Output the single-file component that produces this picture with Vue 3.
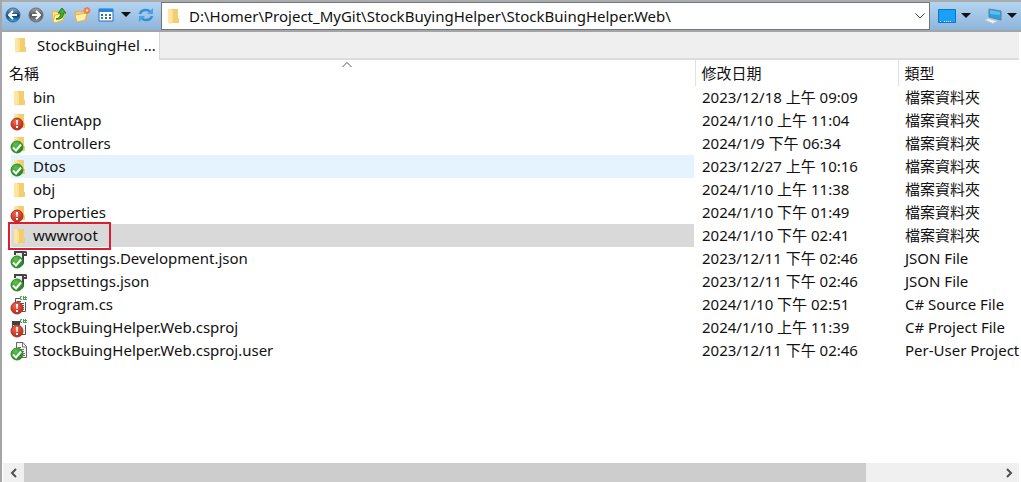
<script setup>
const files = [
  { name: 'bin', kind: 'folder', status: '', date: '2023/12/18 上午 09:09', type: '檔案資料夾' },
  { name: 'ClientApp', kind: 'folder', status: 'changed', date: '2024/1/10 上午 11:04', type: '檔案資料夾' },
  { name: 'Controllers', kind: 'folder', status: 'ok', date: '2024/1/9 下午 06:34', type: '檔案資料夾' },
  { name: 'Dtos', kind: 'folder', status: 'ok', date: '2023/12/27 上午 10:16', type: '檔案資料夾', hover: true },
  { name: 'obj', kind: 'folder', status: '', date: '2024/1/10 上午 11:38', type: '檔案資料夾' },
  { name: 'Properties', kind: 'folder', status: 'changed', date: '2024/1/10 下午 01:49', type: '檔案資料夾' },
  { name: 'wwwroot', kind: 'folder', status: '', date: '2024/1/10 下午 02:41', type: '檔案資料夾', selected: true },
  { name: 'appsettings.Development.json', kind: 'json', status: 'ok', date: '2023/12/11 下午 02:46', type: 'JSON File' },
  { name: 'appsettings.json', kind: 'json', status: 'ok', date: '2023/12/11 下午 02:46', type: 'JSON File' },
  { name: 'Program.cs', kind: 'cs', status: 'changed', date: '2024/1/10 下午 02:51', type: 'C# Source File' },
  { name: 'StockBuingHelper.Web.csproj', kind: 'csproj', status: 'changed', date: '2024/1/10 上午 11:39', type: 'C# Project File' },
  { name: 'StockBuingHelper.Web.csproj.user', kind: 'doc', status: 'ok', date: '2023/12/11 下午 02:46', type: 'Per-User Project' },
]
const path = 'D:\\Homer\\Project_MyGit\\StockBuyingHelper\\StockBuingHelper.Web\\'
</script>

<template>
  <svg class="defs" width="0" height="0" aria-hidden="true">
    <defs>
      <linearGradient id="g-folder" x1="0" x2="1"><stop offset="0" stop-color="#ffecb0" /><stop offset="1" stop-color="#f7d270" /></linearGradient>
      <radialGradient id="g-red" cx=".4" cy=".3" r=".8"><stop offset="0" stop-color="#ee6a50" /><stop offset="1" stop-color="#ad2115" /></radialGradient>
      <radialGradient id="g-green" cx=".4" cy=".3" r=".8"><stop offset="0" stop-color="#63c24c" /><stop offset="1" stop-color="#167a1a" /></radialGradient>
      <linearGradient id="g-blue" x2="0" y2="1"><stop offset="0" stop-color="#8fb4d0" /><stop offset=".45" stop-color="#1d5482" /><stop offset=".55" stop-color="#0b3c6b" /><stop offset="1" stop-color="#38b6ee" /></linearGradient>
      <linearGradient id="g-gray" x2="0" y2="1"><stop offset="0" stop-color="#a8a8a8" /><stop offset=".5" stop-color="#50565c" /><stop offset="1" stop-color="#8b9196" /></linearGradient>
      <symbol id="i-folder" viewBox="0 0 16 18">
        <path d="M3 2h10v14H3z" fill="url(#g-folder)" />
        <path d="M6 2h7v9h1v5H6l2-1V4z" fill="#f3ce70" />
        <path d="M3 2l3 1v14l-3-1z" fill="#ffe6a0" />
      </symbol>
      <symbol id="i-json" viewBox="0 0 16 18">
        <path d="M4 2h9v11l-3 3H4z" fill="#eee" />
        <path d="M4 5V2h10q2 0 2 3h-4M12 3v9q0 3-3 3H7" fill="none" stroke="#444" stroke-width="2" />
      </symbol>
      <symbol id="i-cs" viewBox="0 0 16 18">
        <path d="M4 3h8l3 3v10H4z" fill="#f7f7f7" />
        <path d="M9 2.500H4.500v13h10V6" fill="none" stroke="#555" />
        <path d="M6 5.500h4M7 7.500h6M9 9.500h4M10 11.500h3M10 13.500h3" stroke="#555" />
        <path d="M11 .5H9.500v3H11M12.500 0v4M14.500 0v4M12 1.500h4M12 3.500h4" fill="none" stroke="#48a354" />
      </symbol>
      <symbol id="i-csproj" viewBox="0 0 16 18">
        <path d="M2 4h12v12H2z" fill="#f4f4f4" />
        <path d="M1 2h8v4H1z" fill="#414141" />
        <path d="M1.500 6v9.500h13V6" fill="none" stroke="#555" />
        <path d="M11 .5H9.500v3H11M12.500 0v4M14.500 0v4M12 1.500h4M12 3.500h4" fill="none" stroke="#48a354" />
      </symbol>
      <symbol id="i-doc" viewBox="0 0 16 18">
        <path d="M5.500.5H12l3.500 4v11h-10z" fill="#f5f5f5" stroke="#666" />
        <path d="M11.500 1v4h4M7 5.500h3M7 7.500h6M9 9.500h4M11 11.500h3M11 13.500h3" fill="none" stroke="#777" />
      </symbol>
      <symbol id="s-ok" viewBox="0 0 14 14">
        <circle cx="7" cy="7" r="6" fill="url(#g-green)" stroke="#2c8e29" />
        <path d="M3 7.500l3 3 5-6" fill="none" stroke="#fff" stroke-width="2" />
      </symbol>
      <symbol id="s-changed" viewBox="0 0 14 14">
        <circle cx="7" cy="7" r="6" fill="url(#g-red)" stroke="#b52e20" />
        <path d="M6 3h2l-.4 5H6.400zM6 9h2v2H6z" fill="#fff" />
      </symbol>
    </defs>
  </svg>

  <main class="explorer">
    <header class="toolbar">
      <button class="tool" aria-label="Back">
        <svg width="16" height="16" viewBox="0 0 16 16"><circle cx="8" cy="8" r="7" fill="url(#g-blue)" stroke="#41647f" /><path d="M12 8H5M8 4L4 8l4 4" fill="none" stroke="#fff" stroke-width="2" /></svg>
      </button>
      <button class="tool" aria-label="Forward">
        <svg width="16" height="16" viewBox="0 0 16 16"><circle cx="8" cy="8" r="7" fill="url(#g-gray)" stroke="#686d72" /><path d="M4 8h7M8 4l4 4-4 4" fill="none" stroke="#fff" stroke-width="2" /></svg>
      </button>
      <button class="tool" aria-label="Up one folder">
        <svg width="16" height="16" viewBox="0 0 16 16"><path d="M1 5l4-1 1 1 6-1v9l-8 3-2-2z" fill="#ffe27c" stroke="#dfb74e" /><path d="M2 14l2-6 10-2-2 7-8 3z" fill="#fff0a4" stroke="#dfb74e" /><path d="M5 12q5-1 4.500-6H7l4-5 4 5h-2.500q0 7-7.500 6z" fill="#48ae32" stroke="#237d1c" /></svg>
      </button>
      <button class="tool" aria-label="New folder">
        <svg width="17" height="16" viewBox="0 0 17 16"><path d="M1 5l5-1 1 1 7-1-2 9-9 2z" fill="#ffd071" stroke="#e8ac4c" /><path d="M1 8l12-2-2 7-8 2z" fill="#fff0ae" stroke="#e8b55b" /><path d="M13 0v7M9.500 3.500h7M10.500 1l5 5M15.500 1l-5 5" stroke="#ed7443" stroke-width="1.500" /><circle cx="13" cy="3.500" r="1.300" fill="#ffdf9e" /></svg>
      </button>
      <button class="tool view" aria-label="View">
        <svg width="16" height="14" viewBox="0 0 16 14"><path d="M1 1h14v12H1z" fill="#fff" stroke="#2270bd" /><path d="M1 1h14v3H1z" fill="#2387dc" /><path d="M3 6h2v2H3zM11 6h2v2h-2zM7 9h2v2H7z" fill="#2c65bb" /><path d="M7 6h2v2H7zM3 9h2v2H3z" fill="#358f78" /><path d="M11 9h2v2h-2z" fill="#604a8d" /></svg>
        <svg width="10" height="6" viewBox="0 0 10 6"><path d="M0 0h10L5 5z" fill="#111" /></svg>
      </button>
      <button class="tool" aria-label="Refresh">
        <svg width="16" height="16" viewBox="0 0 16 16"><path d="M2 7q1-4 6-4 3 0 4 2M14 9q-1 4-6 4-3 0-4-2" fill="none" stroke="#348fd9" stroke-width="2.500" /><path d="M15 1v6H9zM1 15V9h6z" fill="#4ba1e3" /></svg>
      </button>
      <div class="address">
        <svg width="16" height="18"><use href="#i-folder" /></svg>
        <input type="text" aria-label="Address" :value="path" />
        <button class="drop" aria-label="Address history"><svg width="10" height="6" viewBox="0 0 10 6"><path d="M.5.5L5 5 9.500.5" fill="none" stroke="#444" /></svg></button>
      </div>
      <button class="tool menu" aria-label="Desktop">
        <svg width="18" height="14" viewBox="0 0 18 14"><path d="M.5.5h17v13H.5z" fill="#18a0fa" stroke="#1772bd" /><path d="M2 12.500h2M6 12.500h8" stroke="#d9efff" stroke-dasharray="1 1" /></svg>
        <svg width="10" height="6" viewBox="0 0 10 6"><path d="M0 0h10L5 5z" fill="#111" /></svg>
      </button>
      <button class="tool menu" aria-label="Computer">
        <svg width="18" height="17" viewBox="0 0 18 17"><path d="M5 1l12 2v9L5 9z" fill="#2f9fe2" stroke="#5583a5" /><path d="M6 2l10 2v3L6 6z" fill="#5dbdf0" /><path d="M1 12l3-1.500 9 2.500-4 2.500z" fill="#edf2f5" stroke="#bccbd6" /></svg>
        <svg width="10" height="6" viewBox="0 0 10 6"><path d="M0 0h10L5 5z" fill="#111" /></svg>
      </button>
    </header>

    <nav class="tabs">
      <button class="tab"><svg width="16" height="18"><use href="#i-folder" /></svg>StockBuingHel ...</button>
    </nav>

    <section class="list">
      <table>
        <colgroup><col /><col class="c-date" /><col class="c-type" /></colgroup>
        <thead>
          <tr>
            <th scope="col">名稱<svg class="sort" width="10" height="6" viewBox="0 0 10 6"><path d="M.5 5L5 .5 9.500 5" fill="none" stroke="#555" /></svg></th>
            <th scope="col">修改日期</th>
            <th scope="col">類型</th>
          </tr>
        </thead>
        <tbody>
          <tr v-for="f in files" :key="f.name">
            <td>
              <div class="entry" :class="{ hover: f.hover, selected: f.selected }">
                <span class="badge-box">
                  <svg width="16" height="18"><use :href="'#i-' + f.kind" /></svg>
                  <svg v-if="f.status" class="badge" width="14" height="14"><use :href="'#s-' + f.status" /></svg>
                </span>
                <span>{{ f.name }}</span>
                <span v-if="f.selected" class="marker"></span>
              </div>
            </td>
            <td>{{ f.date }}</td>
            <td>{{ f.type }}</td>
          </tr>
        </tbody>
      </table>
    </section>

    <footer class="scroll">
      <button aria-label="Scroll left"><svg width="8" height="10" viewBox="0 0 8 10"><path d="M6 1L2 5l4 4" fill="none" stroke="#505050" stroke-width="2" /></svg></button>
      <div class="track"><div class="thumb"></div></div>
      <button aria-label="Scroll right"><svg width="8" height="10" viewBox="0 0 8 10"><path d="M2 1l4 4-4 4" fill="none" stroke="#505050" stroke-width="2" /></svg></button>
    </footer>
  </main>
</template>

<style>
body { background: #fff; overflow: hidden; }
</style>

<style scoped>
.defs { position: absolute; }
.explorer {
  box-sizing: border-box;
  display: flex;
  flex-direction: column;
  height: 100vh;
  border-left: 2px solid #a5a5a8;
  padding-left: 1px;
  background: #fff;
  color: #111;
  font: 15px/23px "Noto Sans", "Noto Sans CJK TC", sans-serif;
}
button { display: flex; align-items: center; margin: 0; padding: 0; border: 0; background: none; color: inherit; font: inherit; }
svg { display: block; flex: none; }
.toolbar {
  box-sizing: border-box;
  display: flex;
  align-items: center;
  height: 32px;
  margin-left: -1px;
  padding-left: 3px;
  gap: 7px;
  border-top: 2px solid #a9abad;
  border-bottom: 2px solid #a3a5a7;
  background: linear-gradient(#b4d5f1, #8db4da);
}
.tool { height: 23px; padding-bottom: 3px; }
.view { gap: 7px; }
.menu { gap: 5px; padding-bottom: 0; }
.address {
  box-sizing: border-box;
  display: flex;
  align-items: center;
  flex: 1;
  min-width: 0;
  height: 28px;
  margin-right: 1px;
  border: 1px solid #71777d;
  background: #fff;
  padding-left: 3px;
}
.address input { flex: 1; min-width: 0; margin: 0 0 0 8px; padding: 0; border: 0; outline: 0; background: none; color: inherit; font: inherit; }
.drop { padding: 0 4px; }
.menu:last-child { margin: 0 4px 0 6px; }
.tabs {
  box-sizing: border-box;
  display: flex;
  height: 28px;
  margin-right: 2px;
  border-bottom: 2px solid #dcdcdc;
  background: #efefef;
}
.tab { box-sizing: border-box; height: 28px; padding: 0 3px 2px 9px; gap: 9px; border-right: 1px solid #d8d8d8; background: #fff; white-space: nowrap; }
.list { flex: 1; min-height: 0; overflow: hidden; }
table { width: 100%; table-layout: fixed; border-collapse: collapse; }
.c-date { width: 203px; }
.c-type { width: 123px; }
th { position: relative; height: 26px; padding: 0 0 0 6px; font-weight: 400; text-align: left; }
th + th { border-left: 1px solid #e2e2e2; }
.sort { position: absolute; top: 2px; left: 49%; }
td { height: 23px; padding: 0 0 0 7px; overflow: hidden; white-space: nowrap; }
td:first-child { padding: 0 1px 0 8px; overflow: visible; }
.entry { position: relative; display: flex; align-items: center; gap: 6px; height: 23px; }
.hover { background: #e5f3ff; }
.selected { background: #d9d9d9; }
.badge-box { position: relative; }
.badge { position: absolute; left: -1px; bottom: -1px; }
.marker { position: absolute; left: -3px; top: -2px; box-sizing: border-box; width: 103px; height: 28px; border: 2px solid #db1f30; }
.scroll { display: flex; height: 19px; margin-right: 2px; background: #f0f0f0; }
.scroll button { justify-content: center; width: 21px; }
.track { flex: 1; }
.thumb { width: 86.4%; height: 100%; background: #cdcdcd; }
</style>
